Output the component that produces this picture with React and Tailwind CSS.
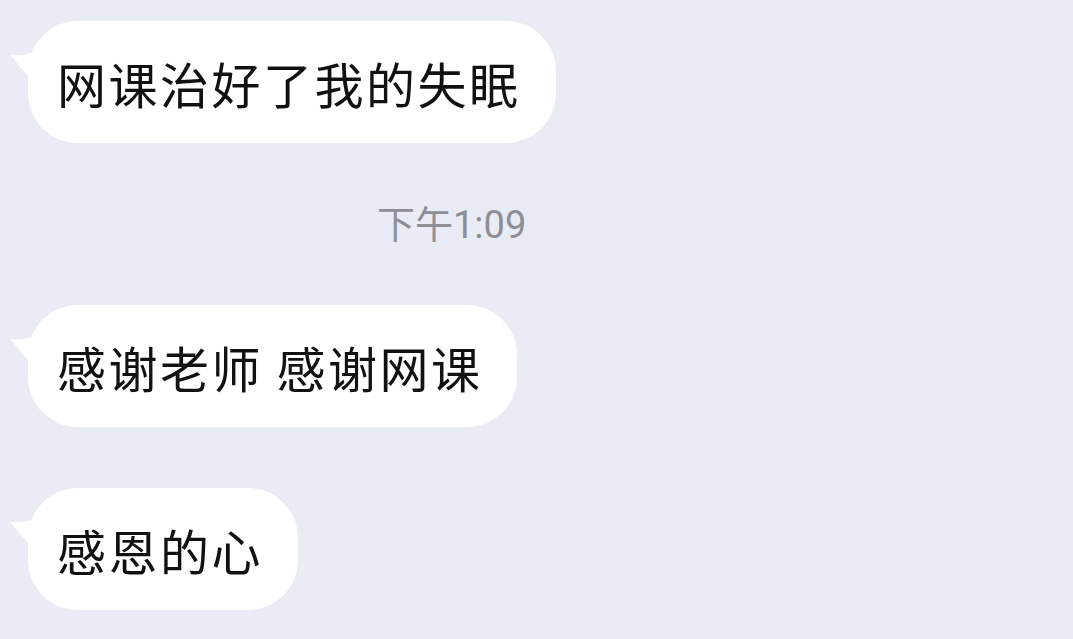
import React from 'react';

const cjk = { fontFamily: '"Noto Sans CJK SC", "Noto Sans", sans-serif' };

function Tail() {
  return (
    <svg
      className="absolute left-[-20px] top-[22px]"
      width="28"
      height="40"
      viewBox="0 0 28 40"
    >
      <path d="M28 8 C 20 12, 10 13, 2 12 C 8 18, 14 28, 26 38 L 28 38 Z" fill="#ffffff" />
    </svg>
  );
}

function Bubble({ text, className }) {
  return (
    <div className={`relative self-start flex items-center h-[122px] pl-[29px] pr-[35px] bg-white rounded-[50px] ${className}`}>
      <Tail />
      <span className="text-[49px] leading-none tracking-[2.5px] text-[#111111] whitespace-pre" style={cjk}>
        {text}
      </span>
    </div>
  );
}

export default function App() {
  return (
    <div className="w-[1073px] h-[639px] overflow-hidden bg-[#e9ebf5] flex flex-col pl-[28px] pt-[21px]">
      <Bubble text="网课治好了我的失眠" />
      <div
        className="ml-[349px] mt-[63px] text-[38px] leading-none text-[#8e8f96]"
        style={{ fontFamily: 'Roboto, "Noto Sans CJK SC", sans-serif' }}
      >
        下午1:09
      </div>
      <Bubble text="感谢老师 感谢网课" className="mt-[61px]" />
      <Bubble text="感恩的心" className="mt-[61px]" />
    </div>
  );
}
